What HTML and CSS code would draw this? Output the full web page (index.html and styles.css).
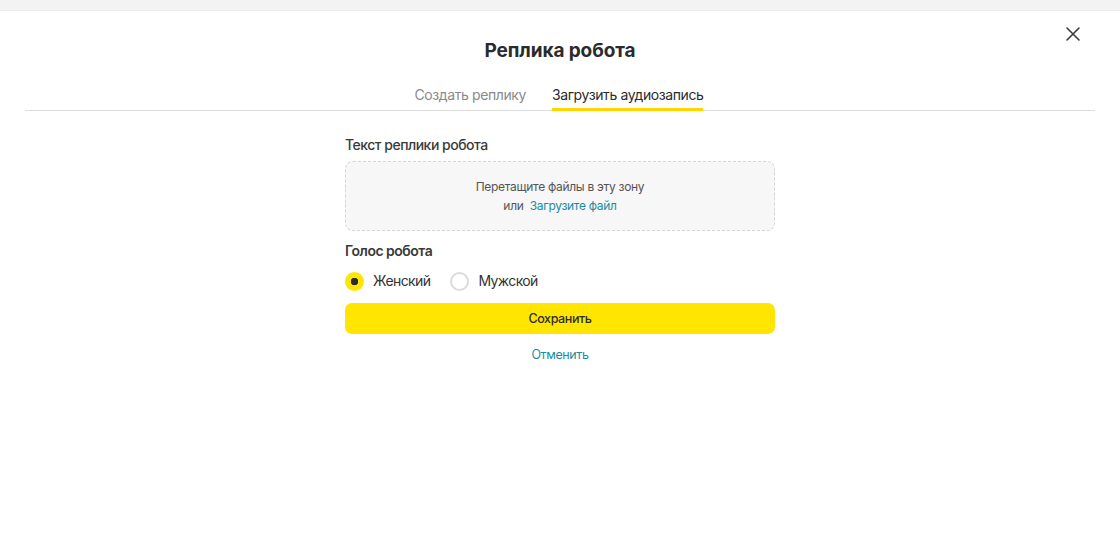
FILE: index.html
```html
<!DOCTYPE html>
<html lang="ru">
<head>
<meta charset="utf-8">
<link rel="stylesheet" href="styles.css">
</head>
<body>
<div class="topbar"></div>
<div class="modal">
  <button class="close" aria-label="Закрыть">
    <svg width="16" height="16" viewBox="0 0 16 16"><path d="M2 2L14 14M14 2L2 14" stroke="#3a3a3a" stroke-width="1.6" stroke-linecap="round"/></svg>
  </button>
  <h1 class="title">Реплика робота</h1>
  <div class="tabs">
    <div class="tab">Создать реплику</div>
    <div class="tab active">Загрузить аудиозапись</div>
  </div>
  <form class="form">
    <div class="label">Текст реплики робота</div>
    <div class="drop">
      <div>Перетащите файлы в эту зону</div>
      <div>или&nbsp; <span class="link">Загрузите файл</span></div>
    </div>
    <div class="label label2">Голос робота</div>
    <div class="radios">
      <label class="radio"><span class="dot on"></span>Женский</label>
      <label class="radio"><span class="dot"></span>Мужской</label>
    </div>
    <div class="save">Сохранить</div>
    <div class="cancel">Отменить</div>
  </form>
</div>
</body>
</html>
```
FILE: styles.css
```css
* { box-sizing: border-box; }
html, body { margin: 0; padding: 0; background: #fff; }
body { font-family: Inter, "Noto Sans", sans-serif; color: #2b2b2b; width: 1120px; height: 544px; overflow: hidden; }
.topbar { height: 11px; background: #f3f3f3; border-bottom: 1px solid #ebebeb; }
.modal { position: relative; padding: 0 25px; }
.close { position: absolute; top: 15px; right: 39px; width: 16px; height: 16px; padding: 0; border: 0; background: none; display: flex; }
.title { margin: 0; padding-top: 27px; text-align: center; font-size: 19px; font-weight: 700; line-height: 25px; color: #2b2b2b; letter-spacing: -0.1px; }
.tabs { display: flex; justify-content: center; gap: 26px; margin-top: 22px; border-bottom: 1px solid #dcdcdc; padding-right: 2px; }
.tab { font-size: 14px; line-height: 20px; padding-bottom: 3px; color: #8a8a8a; border-bottom: 3px solid transparent; margin-bottom: -1px; letter-spacing: -0.4px; }
.tab.active { color: #2b2b2b; border-bottom-color: #ffd600; }
.form { width: 430px; margin: 24px auto 0; display: flex; flex-direction: column; }
.label { font-size: 14px; line-height: 20px; font-weight: 500; color: #3a3a3a; letter-spacing: -0.5px; }
.label2 { margin-top: 10px; font-weight: 600; }
.drop { margin-top: 6px; height: 70px; border: 1px dashed #d6d6d6; border-radius: 8px; background: #f7f7f7; display: flex; flex-direction: column; align-items: center; justify-content: center; gap: 3px; font-size: 12px; line-height: 16px; color: #555; letter-spacing: -0.3px; }
.link { color: #168ea3; }
.radios { display: flex; gap: 20px; margin-top: 10px; }
.radio { display: flex; align-items: center; gap: 9px; font-size: 14px; line-height: 20px; color: #333; letter-spacing: -0.6px; }
.dot { width: 19px; height: 19px; border-radius: 50%; border: 2px solid #dcdcdc; background: #fff; display: inline-block; }
.dot.on { border: 0; background: radial-gradient(circle, #2b2b2b 0 3.5px, #ffe500 4px); }
.save { margin-top: 12px; height: 31px; border-radius: 7px; background: #ffe500; display: flex; align-items: center; justify-content: center; font-size: 12.5px; font-weight: 500; color: #2b2b2b; letter-spacing: -0.4px; }
.cancel { margin-top: 12px; text-align: center; font-size: 12.5px; line-height: 18px; color: #168ea3; letter-spacing: -0.4px; }
```
